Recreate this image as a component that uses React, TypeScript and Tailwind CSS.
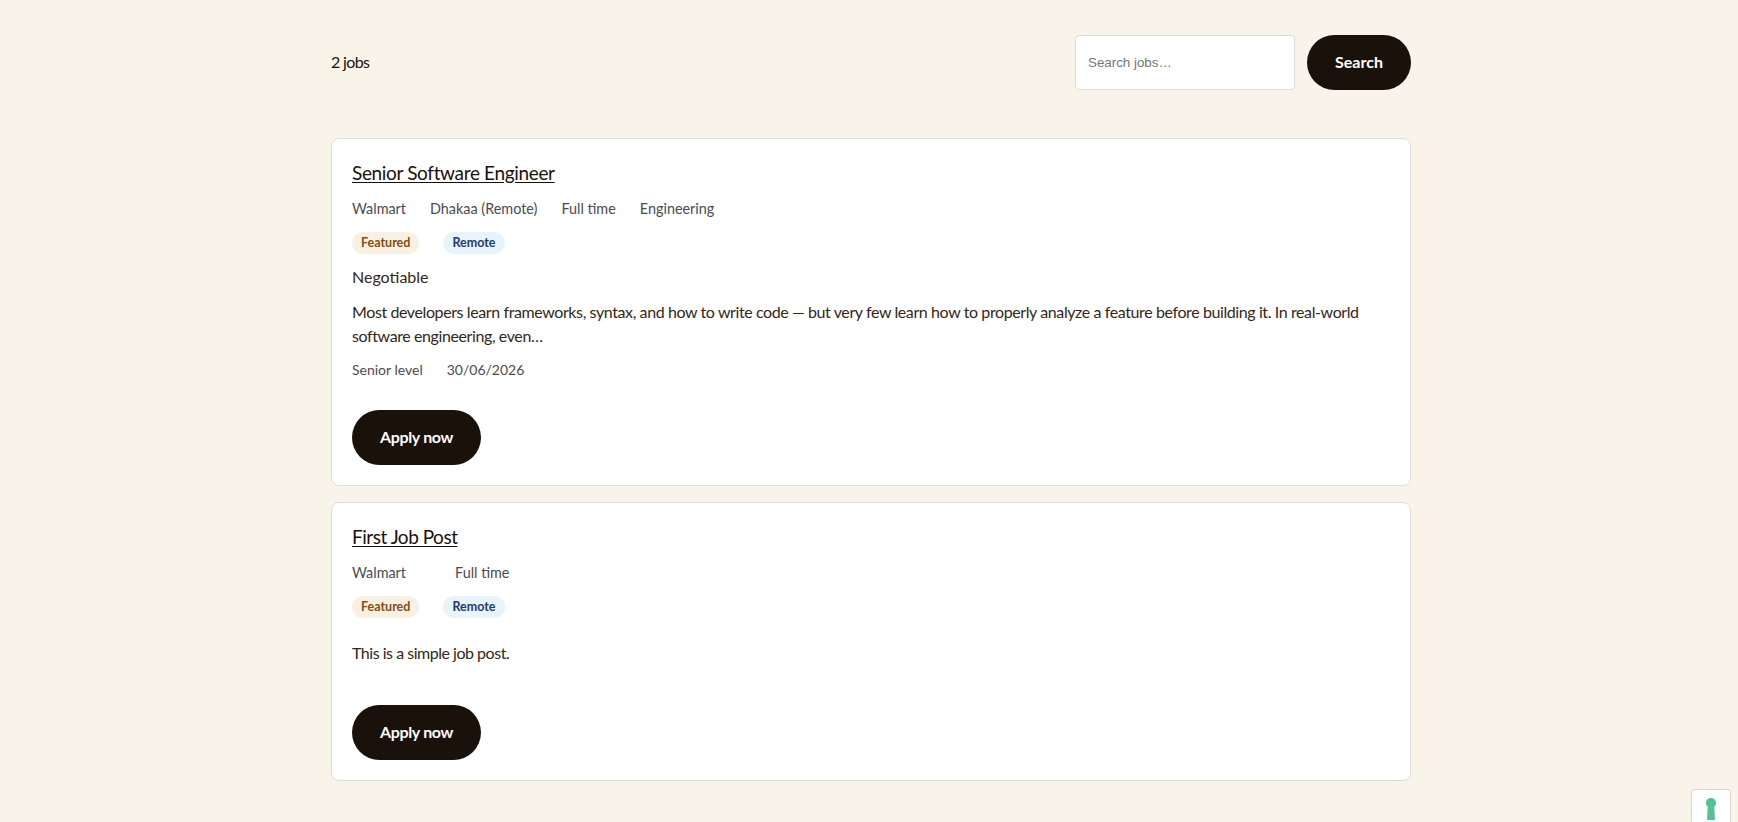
const font = "font-['Lato','Liberation_Sans',sans-serif]";

function Badges() {
  return (
    <div className="mt-[12px] flex h-[22px] gap-6">
      <span className="flex h-[22px] items-center rounded-full bg-[#f9f0e4] px-[9px] text-[12.5px] font-bold text-[#854d0e]">Featured</span>
      <span className="flex h-[22px] items-center rounded-full bg-[#e9f3fc] px-[9px] text-[12.5px] font-bold text-[#1e3a6e]">Remote</span>
    </div>
  );
}

function ApplyButton() {
  return (
    <button className="flex h-[55px] w-[129px] items-center justify-center rounded-full bg-[#1a110a] pb-px text-base font-bold tracking-[-0.02em] text-white">
      Apply now
    </button>
  );
}

function Card1() {
  return (
    <article className="h-[348px] rounded-lg border border-[#dcdcdc] bg-white px-5 pt-[21px]">
      <a className="block text-[19px] leading-[26px] tracking-[-0.018em] text-[#1a110a] underline underline-offset-2">Senior Software Engineer</a>
      <div className="mt-[12px] flex h-[22px] items-center gap-6 text-[14.4px] text-[#4b4b52]">
        <span>Walmart</span>
        <span>Dhakaa (Remote)</span>
        <span>Full time</span>
        <span>Engineering</span>
      </div>
      <Badges />
      <p className="mt-[11px] text-base leading-6 text-[#33261c]">Negotiable</p>
      <p className="mt-[11px] text-base leading-6 tracking-[-0.025em] text-[#33261c]">
        Most developers learn frameworks, syntax, and how to write code — but very few learn how to properly analyze a feature before building it. In real-world software engineering, even…
      </p>
      <div className="mt-[9px] flex h-6 items-center gap-6 text-[14px] text-[#4b4b52]">
        <span>Senior level</span>
        <span>30/06/2026</span>
      </div>
      <div className="mt-[29px]">
        <ApplyButton />
      </div>
    </article>
  );
}

function Card2() {
  return (
    <article className="h-[279px] rounded-lg border border-[#dcdcdc] bg-white px-5 pt-[21px]">
      <a className="block text-[19px] leading-[26px] tracking-[-0.025em] text-[#1a110a] underline underline-offset-2">First Job Post</a>
      <div className="mt-[12px] flex h-[22px] items-center gap-[49px] text-[14.4px] text-[#4b4b52]">
        <span>Walmart</span>
        <span>Full time</span>
      </div>
      <Badges />
      <p className="mt-[23px] text-base leading-6 tracking-[-0.03em] text-[#33261c]">This is a simple job post.</p>
      <div className="mt-[40px]">
        <ApplyButton />
      </div>
    </article>
  );
}

export default function App() {
  return (
    <div className={`relative h-[822px] overflow-hidden bg-[#f8f4ea] ${font}`}>
      <div className="ml-[331px] w-[1080px] pt-[35px]">
        <div className="flex h-[55px] items-center justify-between">
          <span className="pb-px text-base tracking-[-0.04em] text-[#1a110a]">2 jobs</span>
          <div className="flex gap-3">
            <input
              placeholder="Search jobs…"
              className="h-[55px] w-[220px] rounded border border-[#dcdcdc] bg-white px-3 pb-px font-['Liberation_Sans',sans-serif] text-[13.33px] placeholder:text-[#757575]"
            />
            <button className="h-[55px] w-[104px] rounded-full bg-[#1a110a] pb-px text-base font-bold text-white">Search</button>
          </div>
        </div>
        <div className="mt-12 flex flex-col gap-4">
          <Card1 />
          <Card2 />
        </div>
      </div>
      <div className="absolute bottom-0 right-[7px] flex h-[33px] w-[40px] justify-center rounded-t border border-b-0 border-[#d9d5cc] bg-white pt-[8px]">
        <svg width="10" height="22" viewBox="0 0 10 22">
          <path d="M5 0a5 5 0 0 1 3.3 8.8L9 22H1l.7-13.2A5 5 0 0 1 5 0Z" fill="#55c195" />
        </svg>
      </div>
    </div>
  );
}
